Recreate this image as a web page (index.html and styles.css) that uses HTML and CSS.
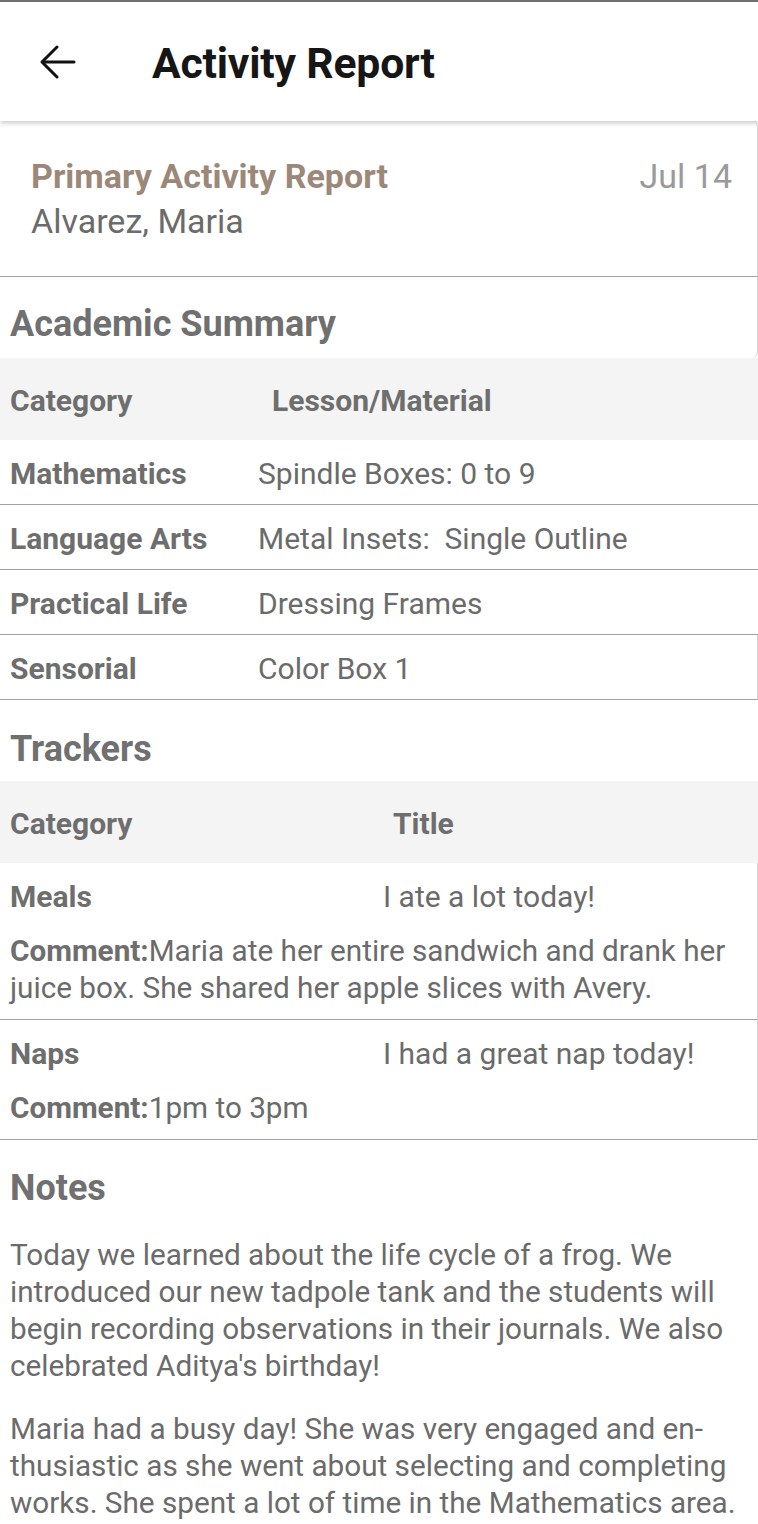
FILE: index.html
```html
<!DOCTYPE html>
<html lang="en">
<head>
<meta charset="utf-8">
<title>Activity Report</title>
<link rel="stylesheet" href="styles.css">
</head>
<body>
<header class="topbar">
  <button class="back" aria-label="Back">
    <svg width="36" height="34" viewBox="0 0 36 34" fill="none" stroke="#111" stroke-width="3" stroke-linecap="round" stroke-linejoin="round">
      <path d="M34 17H3"/>
      <path d="M17 2L2 17L17 32"/>
    </svg>
  </button>
  <h1 class="title">Activity Report</h1>
</header>

<main class="content">
  <section class="report-head">
    <div class="report-line">
      <span class="report-name">Primary Activity Report</span>
      <span class="report-date">Jul 14</span>
    </div>
    <div class="student">Alvarez, Maria</div>
  </section>

  <h2 class="section-title academic-title">Academic Summary</h2>
  <div class="table academic">
    <div class="thead">
      <span class="th">Category</span>
      <span class="th th-second">Lesson/Material</span>
    </div>
    <div class="row"><span class="cat">Mathematics</span><span class="val">Spindle Boxes: 0 to 9</span></div>
    <div class="row"><span class="cat">Language Arts</span><span class="val">Metal Insets:&nbsp; Single Outline</span></div>
    <div class="row"><span class="cat">Practical Life</span><span class="val">Dressing Frames</span></div>
    <div class="row edge"><span class="cat">Sensorial</span><span class="val">Color Box 1</span></div>
  </div>

  <h2 class="section-title trackers-title">Trackers</h2>
  <div class="table trackers">
    <div class="thead">
      <span class="th">Category</span>
      <span class="th th-second">Title</span>
    </div>
    <div class="track">
      <div class="track-line"><span class="cat">Meals</span><span class="val">I ate a lot today!</span></div>
      <p class="comment"><b>Comment:</b>Maria ate her entire sandwich and drank her juice box. She shared her apple slices with Avery.</p>
    </div>
    <div class="track">
      <div class="track-line"><span class="cat">Naps</span><span class="val">I had a great nap today!</span></div>
      <p class="comment"><b>Comment:</b>1pm to 3pm</p>
    </div>
  </div>

  <h2 class="section-title notes-title">Notes</h2>
  <div class="notes">
    <p>Today we learned about the life cycle of a frog. We introduced our new tadpole tank and the students will begin recording observations in their journals. We also celebrated Aditya's birthday!</p>
    <p>Maria had a busy day! She was very engaged and en-thusiastic as she went about selecting and completing works. She spent a lot of time in the Mathematics area.</p>
  </div>
</main>
</body>
</html>
```

FILE: styles.css
```css
* { box-sizing: border-box; }

html, body {
  margin: 0;
  padding: 0;
  background: #fff;
}

body {
  font-family: Roboto, "Liberation Sans", sans-serif;
  color: #6b6b6b;
  border-top: 2px solid #6e6e6e;
  overflow: hidden;
}

.topbar {
  height: 119px;
  display: flex;
  align-items: center;
  background: #fff;
  box-shadow: 0 2px 5px rgba(0,0,0,0.22);
  position: relative;
  z-index: 2;
}

.back {
  border: 0;
  background: none;
  padding: 0;
  margin: 0 0 0 40px;
  width: 36px;
  height: 34px;
  display: flex;
}

.title {
  margin: 2px 0 0 76px;
  font-size: 42.7px;
  font-weight: 700;
  color: #161616;
  letter-spacing: -0.2px;
}

.report-head {
  height: 156px;
  padding: 34px 25px 0 31px;
  border-bottom: 1.5px solid #a0a0a0;
  border-right: 1px solid #cfcfcf;
  border-top-right-radius: 6px;
}

.report-line {
  display: flex;
  justify-content: space-between;
  align-items: baseline;
  line-height: 42px;
}

.report-name {
  font-size: 34px;
  font-weight: 700;
  color: #9c8878;
}

.report-date {
  font-size: 34px;
  color: #9a9a9a;
}

.student {
  font-size: 34px;
  line-height: 42px;
  margin-top: 3px;
  color: #6b6b6b;
}

.section-title {
  margin: 0;
  padding: 0 10px;
  font-size: 36px;
  font-weight: 700;
  color: #707070;
  display: flex;
  align-items: center;
}

.academic-title {
  height: 81px;
  padding-top: 12px;
  border-right: 1px solid #cfcfcf;
  border-bottom-right-radius: 6px;
}
.trackers-title { height: 81px; padding-top: 16px; }
.notes-title { height: 96px; padding-top: 0; }

.thead {
  height: 82px;
  background: #f4f4f4;
  display: grid;
  align-items: center;
  padding: 2px 10px 0;
  font-size: 30px;
  font-weight: 700;
  color: #6e6e6e;
}

.academic .thead { grid-template-columns: 262px 1fr; }
.trackers .thead { grid-template-columns: 383px 1fr; }

.academic .row {
  height: 65px;
  display: grid;
  grid-template-columns: 248px 1fr;
  align-items: center;
  padding: 2px 10px 0;
  border-bottom: 1.5px solid #a0a0a0;
  font-size: 30px;
}

.academic .row.edge {
  border-right: 1px solid #cfcfcf;
}

.cat { font-weight: 700; color: #6e6e6e; }
.val { color: #6b6b6b; }

.trackers {
  border-right: 1px solid #cfcfcf;
}

.trackers .thead { margin-right: -1px; }

.track {
  border-bottom: 1.5px solid #a0a0a0;
  padding: 13px 10px 13px;
}

.track-line {
  display: grid;
  grid-template-columns: 373px 1fr;
  font-size: 30px;
  line-height: 42px;
}

.comment {
  margin: 14px 0 0;
  font-size: 29.7px;
  line-height: 37px;
  color: #6b6b6b;
}

.comment b { color: #6e6e6e; }

.notes {
  padding: 0 10px;
}

.notes p {
  margin: 0 0 26px;
  font-size: 29.7px;
  line-height: 37px;
  color: #6b6b6b;
}
```
